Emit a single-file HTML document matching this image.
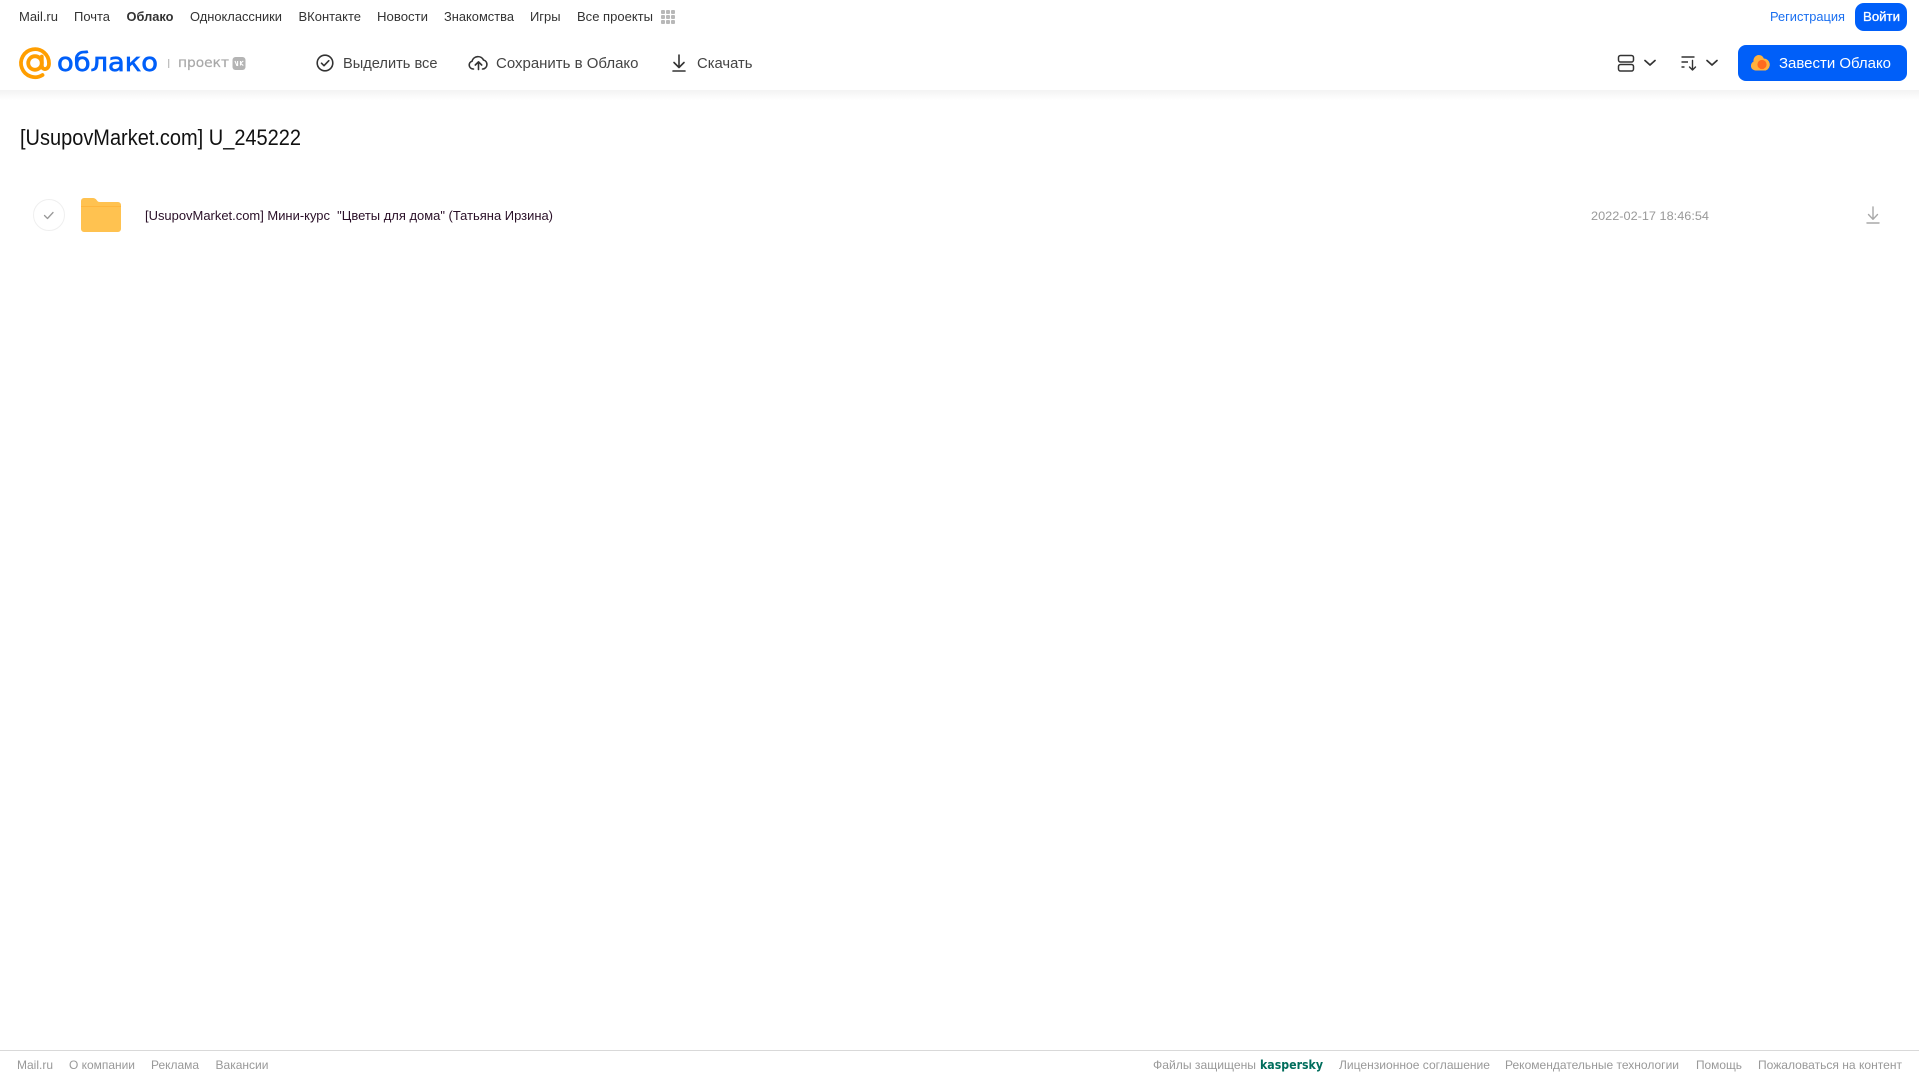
<!DOCTYPE html>
<html lang="ru">
<head>
<meta charset="utf-8">
<title>Облако</title>
<style>
html,body{margin:0;padding:0;background:#fff;width:1919px;height:1079px;overflow:hidden}
#s{position:absolute;left:0;top:0;display:block}
#sh{position:absolute;left:0;top:90px;width:1919px;height:10px;background:linear-gradient(#f3f3f3,#fff)}
text{font-family:"Liberation Sans","DejaVu Sans",sans-serif}
.n{font-size:13px;fill:#333}
.a{font-size:15px;fill:#444}
.f{font-size:12px;fill:#999}
.d{font-family:"DejaVu Sans","Liberation Sans",sans-serif}
</style>
</head>
<body>
<div id="sh"></div>
<svg id="s" width="1919" height="1079" viewBox="0 0 1919 1079" xmlns="http://www.w3.org/2000/svg">
<!-- top nav -->
<text class="n" x="19" y="21" textLength="39" lengthAdjust="spacingAndGlyphs">Mail.ru</text>
<text class="n" x="74" y="21" textLength="36" lengthAdjust="spacingAndGlyphs">Почта</text>
<text class="n" x="126.5" y="21" textLength="47" lengthAdjust="spacingAndGlyphs" font-weight="700" style="fill:#333">Облако</text>
<text class="n" x="190" y="21" textLength="92" lengthAdjust="spacingAndGlyphs">Одноклассники</text>
<text class="n" x="298.5" y="21" textLength="62.5" lengthAdjust="spacingAndGlyphs">ВКонтакте</text>
<text class="n" x="377" y="21" textLength="51" lengthAdjust="spacingAndGlyphs">Новости</text>
<text class="n" x="444" y="21" textLength="70" lengthAdjust="spacingAndGlyphs">Знакомства</text>
<text class="n" x="530" y="21" textLength="30.5" lengthAdjust="spacingAndGlyphs">Игры</text>
<text class="n" x="577" y="21" textLength="76" lengthAdjust="spacingAndGlyphs">Все проекты</text>
<g fill="#b8b8b8">
<rect x="661" y="10" width="4" height="4" rx="1"/><rect x="666" y="10" width="4" height="4" rx="1"/><rect x="671" y="10" width="4" height="4" rx="1"/>
<rect x="661" y="15" width="4" height="4" rx="1"/><rect x="666" y="15" width="4" height="4" rx="1"/><rect x="671" y="15" width="4" height="4" rx="1"/>
<rect x="661" y="20" width="4" height="4" rx="1"/><rect x="666" y="20" width="4" height="4" rx="1"/><rect x="671" y="20" width="4" height="4" rx="1"/>
</g>
<text x="1770" y="21" font-size="13" fill="#1a6ff0" textLength="75" lengthAdjust="spacingAndGlyphs">Регистрация</text>
<rect x="1855" y="3" width="52" height="28" rx="9" fill="#005ff9"/>
<text x="1863" y="21" font-size="13" font-weight="400" stroke="#fff" stroke-width=".3" fill="#fff" textLength="37" lengthAdjust="spacingAndGlyphs">Войти</text>

<!-- logo -->
<g fill="none" stroke="#ff9e00" stroke-width="3.8">
<circle cx="35" cy="63" r="6.8"/>
<path d="M41.8 56.5V65.5C41.8 70.5 49 70.5 49 63.5A14 14 0 1 0 42.5 75" stroke-linecap="round"/>
</g>
<text class="d" x="57" y="71" font-size="26" fill="#005ff9" stroke="#005ff9" stroke-width=".7" textLength="101" lengthAdjust="spacingAndGlyphs">облако</text>
<rect x="168" y="59" width="1.3" height="9" fill="#c0c0c0"/>
<text class="d" x="178" y="67" font-size="13.5" fill="#a8a8a8" stroke="#a8a8a8" stroke-width=".2" textLength="51" lengthAdjust="spacingAndGlyphs">проект</text>
<rect x="232.500" y="57" width="13" height="13" rx="3" fill="#b4b4b4"/>
<path d="M235 61l1.800 4.500h.8V61M240.500 61v4.500M243.300 61l-2.800 2.200 2.800 2.400" fill="none" stroke="#fff" stroke-width="1.100"/>

<!-- actions -->
<circle cx="325" cy="63" r="7.800" fill="none" stroke="#333" stroke-width="1.600"/>
<path d="M321.500 63.200l2.500 2.500 4.800-5" fill="none" stroke="#333" stroke-width="1.600" stroke-linecap="round" stroke-linejoin="round"/>
<text class="a" x="343" y="68" textLength="94.500" lengthAdjust="spacingAndGlyphs">Выделить все</text>
<g transform="translate(0.500 -1.500) scale(1)">
<path d="M473 70.500h-.5A4 4 0 0 1 471.500 62.700 6.200 6.200 0 0 1 483 61.500 4.600 4.600 0 0 1 482.500 70.500H482" fill="none" stroke="#333" stroke-width="1.600" stroke-linecap="round"/>
<path d="M478 71V63.500M474.800 66.500l3.200-3.200 3.200 3.200" fill="none" stroke="#333" stroke-width="1.600" stroke-linecap="round" stroke-linejoin="round"/>
</g>
<text class="a" x="496" y="68" textLength="142.500" lengthAdjust="spacingAndGlyphs">Сохранить в Облако</text>
<path d="M679 55V67.500M674 62.500l5 5 5-5M673 71h12" fill="none" stroke="#333" stroke-width="1.600" stroke-linecap="round" stroke-linejoin="round"/>
<text class="a" x="697" y="68" textLength="55.500" lengthAdjust="spacingAndGlyphs">Скачать</text>

<!-- right controls -->
<g fill="none" stroke="#333" stroke-width="1.500">
<rect x="1618.500" y="55.500" width="15" height="6.500" rx="2"/>
<rect x="1618.500" y="64.500" width="15" height="6.500" rx="2"/>
</g>
<path d="M1645 60.500l5 4.500 5-4.500" fill="none" stroke="#333" stroke-width="1.700" stroke-linecap="round" stroke-linejoin="round"/>
<path d="M1681.500 57h13M1681.500 62h6.500M1681.500 67h3" fill="none" stroke="#333" stroke-width="1.400"/>
<path d="M1692.500 60.500V70M1689.500 67l3 3 3-3" fill="none" stroke="#333" stroke-width="1.400" stroke-linecap="round" stroke-linejoin="round"/>
<path d="M1707 60.500l5 4.500 5-4.500" fill="none" stroke="#333" stroke-width="1.700" stroke-linecap="round" stroke-linejoin="round"/>
<rect x="1738" y="45" width="169" height="36" rx="8" fill="#005ff9"/>
<path d="M1755.500 70.500a4.700 4.700 0 0 1-2-8.900 5.700 5.700 0 0 1 5.300-6.600 5.500 5.500 0 0 1 5 3.500 6.200 6.200 0 0 1 2 12z" fill="#ffb13d"/>
<circle cx="1762" cy="64.500" r="4.600" fill="#ff6a1f"/>
<text x="1779" y="68" font-size="15" fill="#fff" textLength="112" lengthAdjust="spacingAndGlyphs">Завести Облако</text>

<!-- title -->
<text x="20" y="145" font-size="22" fill="#111" textLength="281" lengthAdjust="spacingAndGlyphs">[UsupovMarket.com] U_245222</text>

<!-- row -->
<circle cx="49" cy="215" r="15.500" fill="#fff" stroke="#efefef" stroke-width="1"/>
<path d="M44.500 215.500l3 3 5.500-6" fill="none" stroke="#999" stroke-width="1.300" stroke-linecap="round" stroke-linejoin="round"/>
<path d="M81 201a3 3 0 0 1 3-3h8c3 0 4 1 5 2.500s2 1.500 4 1.500h17a3 3 0 0 1 3 3v24a3 3 0 0 1-3 3H84a3 3 0 0 1-3-3z" fill="#ffc250"/>
<path d="M81 206h40v1H81z" fill="#ffb53c"/>
<text x="145" y="220" font-size="13" fill="#2a1028" textLength="408" lengthAdjust="spacingAndGlyphs" xml:space="preserve">[UsupovMarket.com] Мини-курс  "Цветы для дома" (Татьяна Ирзина)</text>
<text x="1591" y="220" font-size="12" fill="#999" textLength="118" lengthAdjust="spacingAndGlyphs">2022-02-17 18:46:54</text>
<path d="M1873 207V219M1868.500 214.500l4.500 4.800 4.500-4.800M1867 223h12" fill="none" stroke="#a8a8a8" stroke-width="1.400" stroke-linecap="round" stroke-linejoin="round"/>

<!-- footer -->
<rect x="0" y="1050" width="1919" height="1" fill="#d9d9d9"/>
<text class="f" x="17" y="1069" textLength="36" lengthAdjust="spacingAndGlyphs">Mail.ru</text>
<text class="f" x="69" y="1069" textLength="66" lengthAdjust="spacingAndGlyphs">О компании</text>
<text class="f" x="151" y="1069" textLength="48" lengthAdjust="spacingAndGlyphs">Реклама</text>
<text class="f" x="215.500" y="1069" textLength="53" lengthAdjust="spacingAndGlyphs">Вакансии</text>
<text class="f" x="1153" y="1069" textLength="103" lengthAdjust="spacingAndGlyphs">Файлы защищены</text>
<text class="d" x="1260" y="1069" font-size="12" font-weight="700" fill="#006d5c" textLength="63" lengthAdjust="spacingAndGlyphs">kaspersky</text>
<text class="f" x="1339" y="1069" textLength="151" lengthAdjust="spacingAndGlyphs">Лицензионное соглашение</text>
<text class="f" x="1505" y="1069" textLength="174" lengthAdjust="spacingAndGlyphs">Рекомендательные технологии</text>
<text class="f" x="1696" y="1069" textLength="46" lengthAdjust="spacingAndGlyphs">Помощь</text>
<text class="f" x="1758" y="1069" textLength="144" lengthAdjust="spacingAndGlyphs">Пожаловаться на контент</text>
</svg>
</body>
</html>
